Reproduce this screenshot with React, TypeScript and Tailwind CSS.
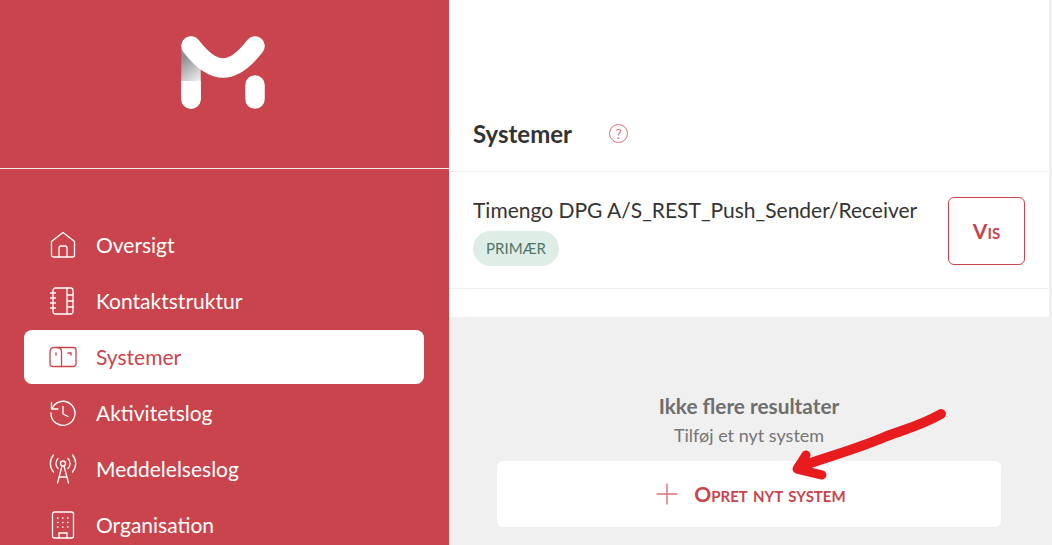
import { Plus } from 'lucide-react';

const HomeIcon = () => (
  <svg width="28" height="28" viewBox="0 0 28 28" fill="none" stroke="currentColor" strokeWidth="1.3" strokeLinejoin="round">
    <path d="M2.500 10.500 14 1.500l11.500 9v13.500a2 2 0 0 1-2 2h-19a2 2 0 0 1-2-2z" />
    <path d="M10 26v-9a2 2 0 0 1 2-2h4a2 2 0 0 1 2 2v9" />
  </svg>
);

const NotebookIcon = () => (
  <svg width="28" height="28" viewBox="0 0 28 28" fill="none" stroke="currentColor" strokeWidth="1.3" strokeLinecap="round">
    <rect x="4" y="1" width="20" height="26" rx="2.500" />
    <path d="M18 1v26M18 8h6M18 14h6M18 20h6M1.500 6h5M1.500 11h5M1.500 16h5M1.500 21h5" />
  </svg>
);

const SystemIcon = () => (
  <svg width="28" height="28" viewBox="0 0 28 28" fill="none" stroke="currentColor" strokeWidth="1.3" strokeLinecap="round">
    <path d="M5 4.500h19.500A2.500 2.500 0 0 1 27 7v14a2.500 2.500 0 0 1-2.500 2.500h-21A2.500 2.500 0 0 1 1 21V8.500a4 4 0 0 1 4-4z" />
    <path d="M8 4.500c3 0 4.500 1.500 4.500 4v15M19 10h3v2M7 10v2" />
  </svg>
);

const HistoryIcon = () => (
  <svg width="28" height="28" viewBox="0 0 28 28" fill="none" stroke="currentColor" strokeWidth="1.3" strokeLinecap="round" strokeLinejoin="round">
    <path d="M3 9.500A12 12 0 1 1 2 14" />
    <path d="M2.500 3.500v6.500H9M14 7.500V15l5 2.500" />
  </svg>
);

const AntennaIcon = () => (
  <svg width="28" height="30" viewBox="0 0 28 30" fill="none" stroke="currentColor" strokeWidth="1.3" strokeLinecap="round">
    <circle cx="14" cy="9.500" r="2.500" />
    <path d="M8.500 29 13 12M19.500 29 15 12M10 23h8M9 14.500a7 7 0 0 1 0-10M19 4.500a7 7 0 0 1 0 10M4.500 18a13 13 0 0 1 0-17M23.500 1a13 13 0 0 1 0 17" />
  </svg>
);

const BuildingIcon = () => (
  <svg width="28" height="28" viewBox="0 0 28 28" fill="none" stroke="currentColor" strokeWidth="1.3" strokeLinecap="round">
    <rect x="3.500" y="1" width="21" height="26" rx="2" />
    <path d="M10 27v-5h8v5" />
    <path d="M8.500 7h.5M13.500 7h.5M18.500 7h.5M8.500 11.500h.5M13.500 11.500h.5M18.500 11.500h.5M8.500 16h.5M13.500 16h.5M18.500 16h.5" />
  </svg>
);

const navItems = [
  { label: 'Oversigt', icon: <HomeIcon /> },
  { label: 'Kontaktstruktur', icon: <NotebookIcon /> },
  { label: 'Systemer', icon: <SystemIcon />, active: true },
  { label: 'Aktivitetslog', icon: <HistoryIcon /> },
  { label: 'Meddelelseslog', icon: <AntennaIcon /> },
  { label: 'Organisation', icon: <BuildingIcon /> },
];

const Logo = () => (
  <svg width="84" height="73" viewBox="0 0 84 73" fill="none">
    <defs>
      <linearGradient id="fold" gradientUnits="userSpaceOnUse" x1="19" y1="50" x2="0" y2="24">
        <stop offset="0" stopColor="#ffffff" />
        <stop offset="1" stopColor="#8f8f8f" />
      </linearGradient>
    </defs>
    <path d="M10 10V63" stroke="url(#fold)" strokeWidth="19.500" strokeLinecap="round" />
    <path d="M0.300 63a9.700 9.700 0 0 0 19.400 0V45H0.300z" fill="white" />
    <path d="M10 10 Q 27 32 42 32 Q 57 32 74 10" stroke="white" strokeWidth="19.500" strokeLinecap="round" fill="none" />
    <path d="M74 49V63" stroke="white" strokeWidth="19.500" strokeLinecap="round" />
  </svg>
);

export default function App() {
  return (
    <div className="relative flex h-[545px] w-[1052px] overflow-hidden bg-[#f0f0f0] font-['Lato',sans-serif]">
      {/* Sidebar */}
      <aside className="flex w-[449px] shrink-0 flex-col bg-[#c9444c]">
        <div className="flex h-[169px] shrink-0 justify-center border-b border-white/90 pt-[36px] pr-[3px]">
          <div className="h-[73px]">
            <Logo />
          </div>
        </div>
        <nav className="flex flex-col px-6 pt-[48px]">
          {navItems.map((item) => (
            <div key={item.label} className="flex h-[56px] shrink-0 items-center">
              <div className={`flex h-[54px] w-[400px] items-center gap-[19px] rounded-lg pl-[25px] text-[21px] ${item.active ? 'bg-white text-[#c9444c]' : 'text-white'}`}>
                <span className="flex w-[28px] items-center justify-center">{item.icon}</span>
                <span>{item.label}</span>
              </div>
            </div>
          ))}
        </nav>
      </aside>

      {/* Content */}
      <main className="flex w-[600px] flex-col">
        <div className="bg-white">
          <div className="flex h-[172px] items-end border-b border-[#f0f0f0] pb-[22px] pl-6">
            <h1 className="text-[24px] leading-[30px] font-bold text-[#333333]">Systemer</h1>
            <span className="mb-[6px] ml-[37px] flex h-[19px] w-[19px] items-center justify-center rounded-full border border-[#d9747b] text-[14px] leading-none text-[#d9747b]">?</span>
          </div>
          <div className="flex h-[117px] items-center justify-between border-b border-[#f0f0f0] pr-6 pl-6">
            <div className="flex flex-col gap-[8px] pt-[3px]">
              <span className="text-[21px] leading-[26px] text-[#333333]">Timengo DPG A/S_REST_Push_Sender/Receiver</span>
              <span className="flex h-[35px] w-[86px] items-center justify-center rounded-full bg-[#deede5] text-[15px] text-[#4f7568]">PRIMÆR</span>
            </div>
            <button className="mt-[2px] flex h-[68px] w-[77px] items-center justify-center rounded-md border border-[#c9444c] bg-white text-[21px] font-bold text-[#c9444c] [font-variant:small-caps]">
              Vis
            </button>
          </div>
          <div className="h-[28px]" />
        </div>

        <div className="flex flex-1 flex-col items-center pt-[74px]">
          <h2 className="text-[20.800px] leading-[30px] font-bold text-[#6e6e6e]">Ikke flere resultater</h2>
          <p className="mt-[2px] text-[18px] leading-[24px] text-[#757575]">Tilføj et nyt system</p>
          <button className="mt-[14px] flex h-[66px] w-[504px] shrink-0 items-center justify-center gap-[10px] rounded-md bg-white pr-[2px] text-[#c9444c]">
            <Plus size={34} strokeWidth={1} className="text-[#d9747b]" />
            <span className="text-[21px] font-bold [font-variant:small-caps]">Opret nyt system</span>
          </button>
        </div>
      </main>

      {/* Hand-drawn arrow over the content */}
      <svg className="absolute top-[405px] left-[785px]" width="165" height="80" viewBox="0 0 165 80" fill="none">
        <path d="M156 9C135 21 120 24 102 31C75 43 45 51 14 62" stroke="#e81c1e" strokeWidth="10" strokeLinecap="round" />
        <path d="M21 50 12 64 37 70" stroke="#e81c1e" strokeWidth="9" strokeLinecap="round" strokeLinejoin="round" />
      </svg>
    </div>
  );
}
